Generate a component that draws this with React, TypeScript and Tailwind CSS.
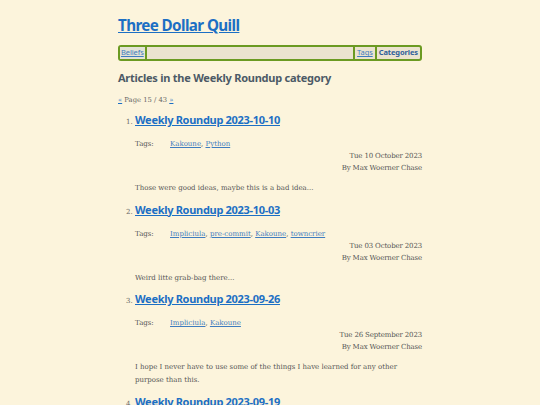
import React from 'react'

type Article = {
  title: string
  tags: string[]
  date: string
  summary: string
}

const ARTICLES: Article[] = [
  {
    title: 'Weekly Roundup 2023-10-10',
    tags: ['Kakoune', 'Python'],
    date: 'Tue 10 October 2023',
    summary: 'Those were good ideas, maybe this is a bad idea...',
  },
  {
    title: 'Weekly Roundup 2023-10-03',
    tags: ['Impliciula', 'pre-commit', 'Kakoune', 'towncrier'],
    date: 'Tue 03 October 2023',
    summary: 'Weird litte grab-bag there...',
  },
  {
    title: 'Weekly Roundup 2023-09-26',
    tags: ['Impliciula', 'Kakoune'],
    date: 'Tue 26 September 2023',
    summary:
      'I hope I never have to use some of the things I have learned for any other purpose than this.',
  },
  {
    title: 'Weekly Roundup 2023-09-19',
    tags: ['Kakoune'],
    date: 'Tue 19 September 2023',
    summary: 'More of the same.',
  },
]

const sans = { fontFamily: '"Noto Sans", "Open Sans", sans-serif' }
const serif = { fontFamily: '"DejaVu Serif", "Liberation Serif", serif' }

export default function App() {
  return (
    <div className="h-[405px] overflow-hidden bg-[#fcf4dc] text-[#555]" style={serif}>
      <div className="mx-auto w-[304px] pt-[14px]">
        <h1 className="text-[15.2px] font-bold leading-[22px] tracking-[-0.6px]" style={sans}>
          <a href="#" className="text-[#1c6fc4] underline">
            Three Dollar Quill
          </a>
        </h1>

        <nav
          className="mt-[9px] flex h-[16px] items-stretch rounded-[3px] border-2 border-[#6b9a22] bg-[#ebe3cf] text-[7.5px] tracking-[-0.1px]"
          style={sans}
        >
          <a href="#" className="flex items-center bg-[#e3e3d6] px-[1px] text-[#3f7cbf] underline">
            Beliefs
          </a>
          <span className="w-[2px] bg-[#6b9a22]" />
          <span className="flex-1" />
          <span className="w-[2px] bg-[#6b9a22]" />
          <a href="#" className="flex items-center px-[2px] text-[#3f7cbf] underline">
            Tags
          </a>
          <span className="w-[2px] bg-[#6b9a22]" />
          <span className="flex items-center px-[2px] font-bold text-[#2f5f9a]">Categories</span>
        </nav>

        <h2
          className="mt-[8px] text-[11px] font-bold leading-[18px] tracking-[-0.25px] text-[#4c5a66]"
          style={sans}
        >
          Articles in the Weekly Roundup category
        </h2>

        <p className="mt-[8px] text-[6.8px] leading-[10px] text-[#666]">
          <a href="#" className="text-[#1c6fc4] underline">
            «
          </a>{' '}
          Page 15 / 43{' '}
          <a href="#" className="text-[#1c6fc4] underline">
            »
          </a>
        </p>

        <ol className="mt-[6px] list-decimal pl-[17px] marker:text-[7px] marker:text-[#666]">
          {ARTICLES.map((a) => (
            <li key={a.title} className="mb-[5.5px]">
              <h3 className="text-[11px] font-bold leading-[18px] tracking-[-0.3px]" style={sans}>
                <a href="#" className="text-[#1c6fc4] underline">
                  {a.title}
                </a>
              </h3>
              <div className="mt-[9px] flex text-[7px] leading-[12px]">
                <span className="w-[35px]">Tags:</span>
                <span>
                  {a.tags.map((t, i) => (
                    <React.Fragment key={t}>
                      {i > 0 && ', '}
                      <a href="#" className="text-[#3f7cbf] underline">
                        {t}
                      </a>
                    </React.Fragment>
                  ))}
                </span>
              </div>
              <div className="text-right text-[7px] leading-[12px] tracking-[-0.15px]">
                <div>{a.date}</div>
                <div>By Max Woerner Chase</div>
              </div>
              <p className="mt-[8px] text-[7px] leading-[13px]">{a.summary}</p>
            </li>
          ))}
        </ol>
      </div>
    </div>
  )
}
